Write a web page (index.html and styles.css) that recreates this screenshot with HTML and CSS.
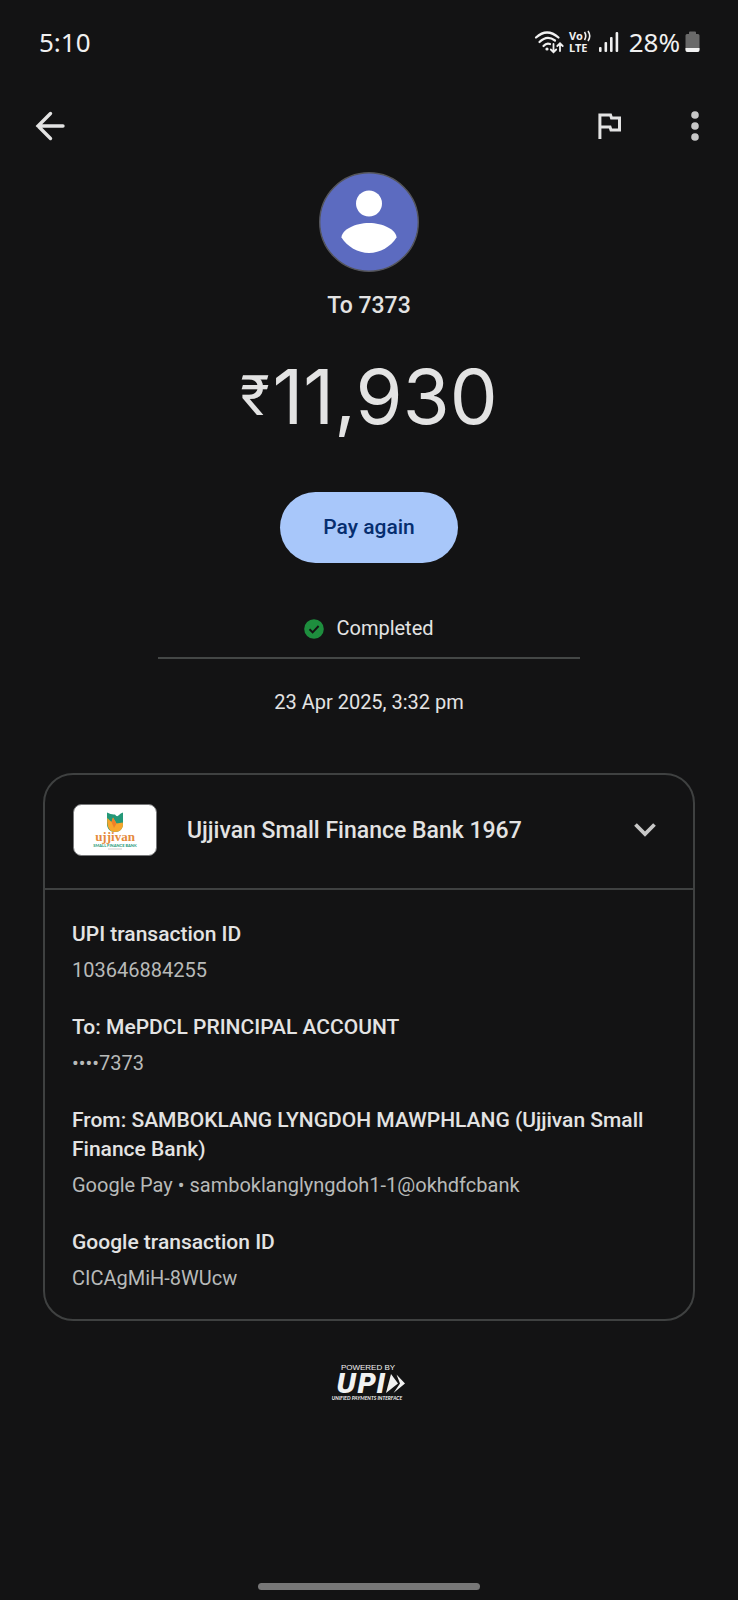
FILE: index.html
```
<!DOCTYPE html>
<html lang="en">
<head>
<meta charset="utf-8">
<meta name="viewport" content="width=device-width, initial-scale=1">
<title>Transaction details</title>
<link rel="stylesheet" href="styles.css">
</head>
<body>
<div class="screen">
  <div class="status">
    <span class="status-time">5:10</span>
    <div class="status-icons">
      <svg class="wifi" width="30" height="24" viewBox="0 0 30 24" fill="none" stroke="currentColor" stroke-width="2.2" stroke-linecap="round">
        <path d="M2 7.500Q13 -2.500 24.500 7.500M5.500 12Q13 4.500 21 10.500M9.500 16Q12.500 12.500 16 14"/>
        <circle cx="13" cy="19" r="1.600" fill="currentColor" stroke="none"/>
        <path stroke-width="1.800" d="M19.500 14V22M16.800 19.500L19.500 22.200L22.200 19.500M26 21V13.500M23.300 16L26 13.300L28.700 16"/>
      </svg>
      <svg class="volte" width="23" height="24" viewBox="0 0 23 24" fill="currentColor">
        <text class="volte-text" x="0" y="10">Vo</text>
        <path d="M15.500 2Q18 6 15.500 10M19 1Q22.500 6 19 11" fill="none" stroke="currentColor" stroke-width="1.600"/>
        <text class="volte-text" x="0" y="22">LTE</text>
      </svg>
      <svg class="signal" width="20" height="22" viewBox="0 0 20 22" fill="currentColor">
        <rect x="0" y="16" width="2.600" height="5" rx="1"/><rect x="5.500" y="11" width="2.600" height="10" rx="1"/><rect x="11" y="6" width="2.600" height="15" rx="1"/><rect x="16.600" y="1" width="2.600" height="20" rx="1"/>
      </svg>
      <span class="status-battery">28%</span>
      <svg width="15" height="22" viewBox="0 0 15 22">
        <path d="M4 1.500Q4 .5 5 .5H10Q11 .5 11 1.500V3H13Q14.500 3 14.500 4.500V19Q14.500 21 12.500 21H2.500Q.5 21 .5 19V4.500Q.5 3 2 3H4Z" fill="#696969"/>
        <path d="M.5 17H14.500V19Q14.500 21 12.500 21H2.500Q.5 21 .5 19Z" fill="#f2f2f2"/>
      </svg>
    </div>
  </div>

  <header class="toolbar">
    <button class="icon-button" type="button" aria-label="Back">
      <svg width="30" height="30" viewBox="0 0 30 30" fill="none" stroke="currentColor" stroke-width="3.400" stroke-linecap="round"><path d="M15.500 2.500L3 15L15.500 27.500M3 15H28"/></svg>
    </button>
    <div class="toolbar-actions">
      <button class="icon-button" type="button" aria-label="Report">
        <svg width="26" height="28" viewBox="0 0 26 28" fill="none" stroke="currentColor" stroke-width="3"><path d="M3.900 27V2.900H14.500L15.500 5.900H23.500V18H15L14 15H3.900"/></svg>
      </button>
      <button class="icon-button" type="button" aria-label="More options">
        <svg width="10" height="30" viewBox="0 0 10 30" fill="#c7c7c7"><circle cx="5" cy="4" r="3.800"/><circle cx="5" cy="15" r="3.800"/><circle cx="5" cy="26" r="3.800"/></svg>
      </button>
    </div>
  </header>

  <main>
    <section class="summary">
      <svg class="avatar" width="100" height="100" viewBox="0 0 100 100">
        <circle cx="50" cy="50" r="49.300" fill="#5c6bc0" stroke="#55565c" stroke-width="1.400"/>
        <circle cx="50" cy="31.500" r="13" fill="#fff"/>
        <path d="M50 51C64 51 77.500 58 77.500 65.500C72 74.500 61 81 50 81S28 74.500 22.500 65.500C22.500 58 36 51 50 51Z" fill="#fff"/>
      </svg>
      <h1 class="payee">To 7373</h1>
      <p class="amount"><span class="currency">₹</span>11,930</p>
      <button class="pay" type="button">Pay again</button>
      <p class="state">
        <svg width="20" height="20" viewBox="0 0 20 20"><circle cx="10" cy="10" r="9.800" fill="#1e8e3e"/><path d="M5.500 10.300L8.600 13.300L14.600 7" fill="none" stroke="#131314" stroke-width="1.900"/></svg>
        Completed
      </p>
      <p class="date">23 Apr 2025, 3:32 pm</p>
    </section>

    <section class="card">
      <button class="bank" type="button" aria-expanded="true">
        <svg class="bank-logo" width="84" height="52" viewBox="0 0 84 52">
          <rect x=".5" y=".5" width="83" height="51" rx="8" fill="#fff" stroke="#77787a" stroke-width="1"/>
          <path d="M34 8.500Q38.500 11 42 10.500Q44 13.500 46 11Q47.500 9 50 8.500V20C50 25 46.500 28 42 28S34 25 34 20Z" fill="#249878"/>
          <path d="M34.300 14L38.500 18L40 13.500L43.500 19.500L49.800 18.500C51 25 46.500 28 42 28C37 28 33.500 24 34.300 14Z" fill="#f6a62c"/>
          <path d="M40 13.500L43.500 19.500L41 24L38.500 18Z" fill="#ef8128"/>
          <text class="logo-name" x="42" y="37" text-anchor="middle">ujjivan</text>
          <text class="logo-sub" x="42" y="43" text-anchor="middle">SMALL FINANCE BANK</text>
          <path d="M35 45H49" stroke="#b9b9b9" stroke-width=".7"/>
        </svg>
        <span class="bank-name">Ujjivan Small Finance Bank 1967</span>
        <svg width="24" height="16" viewBox="0 0 24 16" fill="none" stroke="#c7c7c7" stroke-width="3.800"><path d="M2.500 2.500L12 12L21.500 2.500"/></svg>
      </button>
      <dl class="details">
        <div><dt>UPI transaction ID</dt><dd>103646884255</dd></div>
        <div><dt>To: MePDCL PRINCIPAL ACCOUNT</dt><dd>••••7373</dd></div>
        <div><dt>From: SAMBOKLANG LYNGDOH MAWPHLANG (Ujjivan Small Finance Bank)</dt><dd>Google Pay • samboklanglyngdoh1-1@okhdfcbank</dd></div>
        <div><dt>Google transaction ID</dt><dd>CICAgMiH-8WUcw</dd></div>
      </dl>
    </section>
  </main>

  <footer class="powered">
    <svg width="74" height="40" viewBox="0 0 74 40" fill="#f1f1f1">
      <text class="powered-by" x="36" y="7" text-anchor="middle">POWERED BY</text>
      <text class="upi" x="4" y="30">UPI</text>
      <path d="M59 11L66 20.500L54 30Z"/><path d="M64.500 11.500L73 20.500L61.500 30L68 20.500Z"/>
      <text class="upi-sub" x="35" y="37" text-anchor="middle">UNIFIED PAYMENTS INTERFACE</text>
    </svg>
  </footer>
  <div class="nav-handle"></div>
</div>
</body>
</html>
```
FILE: styles.css
```
* {
  box-sizing: border-box;
}

body {
  margin: 0;
  background: #131314;
  color: #e3e3e3;
  font-family: Roboto, "Noto Sans", sans-serif;
  font-size: 20px;
  line-height: 29px;
}

button {
  margin: 0;
  padding: 0;
  border: 0;
  background: none;
  color: inherit;
  font: inherit;
  cursor: pointer;
}

p, h1, dl, dd {
  margin: 0;
}

svg {
  display: block;
  flex: none;
  overflow: visible;
}

.screen {
  display: flex;
  flex-direction: column;
  min-height: 100vh;
  padding-bottom: 10px;
}

.status {
  display: flex;
  align-items: center;
  justify-content: space-between;
  padding: 23px 38px 0 39px;
  color: #f0f0f0;
  font-family: "Noto Sans", sans-serif;
  font-size: 26px;
  line-height: 38px;
}

.status-icons {
  display: flex;
  align-items: center;
}

.wifi {
  margin-right: 5px;
}

.volte {
  margin-right: 7px;
}

.volte-text {
  font: 700 11px "Noto Sans", sans-serif;
}

.signal {
  margin-right: 10px;
}

.status-battery {
  margin-right: 5px;
}

.toolbar {
  display: flex;
  align-items: center;
  justify-content: space-between;
  height: 48px;
  margin: 41px 38px 0 35px;
}

.toolbar-actions {
  display: flex;
  gap: 68px;
}

.summary {
  display: flex;
  flex-direction: column;
  align-items: center;
  margin-top: 22px;
}

.payee {
  margin-top: 19px;
  font-size: 23px;
  font-weight: 500;
  line-height: 30px;
}

.amount {
  display: flex;
  align-items: center;
  gap: 3px;
  margin-top: 30px;
  font-family: Inter, sans-serif;
  font-size: 76px;
  line-height: 90px;
}

.currency {
  font-family: Roboto, sans-serif;
  font-size: 56px;
}

.pay {
  min-width: 178px;
  padding: 21px 43px;
  margin-top: 51px;
  border-radius: 36px;
  background: #a8c7fa;
  color: #062e6f;
  font-size: 21px;
  font-weight: 500;
}

.state {
  display: flex;
  align-items: center;
  justify-content: center;
  gap: 12px;
  width: 422px;
  max-width: 80%;
  margin-top: 51px;
  padding-bottom: 14px;
  border-bottom: 2px solid #444746;
}

.date {
  margin-top: 29px;
}

.card {
  margin: 56px 43px 0;
  border: 2px solid #3f4141;
  border-radius: 30px;
}

.bank {
  display: flex;
  align-items: center;
  width: 100%;
  padding: 29px 36px 32px 28px;
  border-bottom: 2px solid #3f4141;
  text-align: left;
}

.bank-name {
  flex: 1;
  margin-left: 30px;
  font-size: 23px;
  font-weight: 500;
}

.logo-name {
  fill: #e58a3c;
  font: 700 13px "Liberation Serif", serif;
}

.logo-sub {
  fill: #249878;
  font: 700 4px Lato, sans-serif;
}

.details {
  display: flex;
  flex-direction: column;
  gap: 28px;
  padding: 30px 27px 26px;
}

dt {
  font-size: 21px;
  font-weight: 500;
}

dd {
  margin-top: 7px;
  color: #b8bab9;
}

.powered {
  display: flex;
  justify-content: center;
  margin-top: 42px;
}

.powered-by {
  font: 8px "Liberation Sans", sans-serif;
}

.upi {
  font: italic 700 26px "DejaVu Sans", sans-serif;
}

.upi-sub {
  font: italic 700 5px Lato, sans-serif;
}

.nav-handle {
  width: 222px;
  height: 7px;
  margin: auto auto 0;
  border-radius: 4px;
  background: #777;
}
```
